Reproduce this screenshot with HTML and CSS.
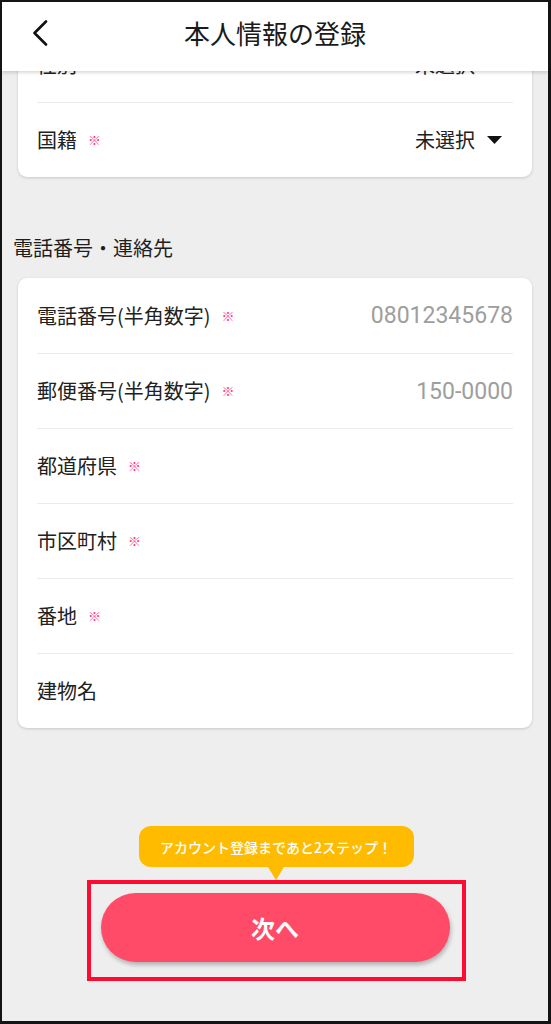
FILE: index.html
```html
<!DOCTYPE html>
<html lang="ja">
<head>
<meta charset="utf-8">
<title>本人情報の登録</title>
<link rel="stylesheet" href="styles.css">
</head>
<body>
<div class="frame">
  <header class="appbar">
    <div class="appbar-side">
      <button class="back" aria-label="戻る">
        <svg width="16" height="26" viewBox="0 0 16 26"><path d="M14 1.5 L2.5 13 L14 24.5" fill="none" stroke="#111" stroke-width="2.6" stroke-linecap="round" stroke-linejoin="round"/></svg>
      </button>
    </div>
    <h1 class="title">本人情報の登録</h1>
    <div class="appbar-side"></div>
  </header>

  <main class="content">
    <section class="card">
      <div class="row">
        <span class="label">性別<span class="req">※</span></span>
        <span class="select">未選択<svg class="caret" width="15" height="8" viewBox="0 0 15 8"><path d="M0 0 H15 L7.5 8 Z" fill="#111"/></svg></span>
      </div>
      <div class="row">
        <span class="label">国籍<span class="req">※</span></span>
        <span class="select">未選択<svg class="caret" width="15" height="8" viewBox="0 0 15 8"><path d="M0 0 H15 L7.5 8 Z" fill="#111"/></svg></span>
      </div>
    </section>

    <h2 class="section-title">電話番号・連絡先</h2>

    <section class="card">
      <div class="row">
        <span class="label">電話番号(半角数字)<span class="req">※</span></span>
        <span class="placeholder">08012345678</span>
      </div>
      <div class="row">
        <span class="label">郵便番号(半角数字)<span class="req">※</span></span>
        <span class="placeholder">150-0000</span>
      </div>
      <div class="row">
        <span class="label">都道府県<span class="req">※</span></span>
      </div>
      <div class="row">
        <span class="label">市区町村<span class="req">※</span></span>
      </div>
      <div class="row">
        <span class="label">番地<span class="req">※</span></span>
      </div>
      <div class="row">
        <span class="label">建物名</span>
      </div>
    </section>

    <div class="footer">
      <div class="tip">アカウント登録まであと2ステップ！</div>
      <div class="highlight">
        <button class="next">次へ</button>
      </div>
    </div>
  </main>
</div>
</body>
</html>
```

FILE: styles.css
```css
* { box-sizing: border-box; }

html, body {
  margin: 0;
  padding: 0;
  background: #eeeeee;
}

body {
  font-family: "Noto Sans CJK JP", Roboto, sans-serif;
  color: #212121;
}

.frame {
  position: relative;
  width: 551px;
  height: 1024px;
  overflow: hidden;
  background: #eeeeee;
  border-style: solid;
  border-color: #141414;
  border-width: 2px 3px 3px 2px;
}

/* header overlays scrolled content */
.appbar {
  position: absolute;
  top: 0;
  left: 0;
  right: 0;
  height: 69px;
  z-index: 5;
  background: #ffffff;
  box-shadow: 0 2px 3px rgba(0, 0, 0, 0.14);
  display: grid;
  grid-template-columns: 1fr auto 1fr;
  align-items: center;
  padding-bottom: 7px;
}

.appbar-side {
  display: flex;
  align-items: center;
}

.back {
  margin-left: 30px;
  padding: 0;
  border: 0;
  background: none;
  display: flex;
}

.title {
  margin: 0;
  font-size: 26px;
  font-weight: 400;
  line-height: 34px;
  color: #1a1a1a;
}

.content {
  padding-top: 25px;
}

.card {
  margin: 0 16px;
  background: #ffffff;
  border-radius: 9px;
  box-shadow: 0 1px 3px rgba(0, 0, 0, 0.16);
  padding: 0 19px;
}

.row {
  height: 75px;
  display: flex;
  align-items: center;
  justify-content: space-between;
  border-top: 1px solid #ebebeb;
}

.row:first-child {
  border-top: 0;
}

.label {
  font-size: 20px;
  line-height: 28px;
  display: flex;
  align-items: center;
}

.req {
  color: #ff3d84;
  font-size: 13px;
  font-weight: 700;
  margin-left: 11px;
}

.select {
  font-size: 20px;
  line-height: 28px;
  display: flex;
  align-items: center;
  gap: 12px;
  margin-right: 11px;
}

.caret {
  display: block;
}

.placeholder {
  font-family: Roboto, sans-serif;
  font-size: 23px;
  color: #9e9e9e;
}

.section-title {
  margin: 0;
  padding: 57px 11px 16px;
  font-size: 20px;
  font-weight: 400;
  line-height: 28px;
  color: #1e1e1e;
}

.footer {
  margin-top: 98px;
  display: flex;
  flex-direction: column;
  align-items: center;
}

.tip {
  position: relative;
  width: 275px;
  height: 41px;
  margin-left: 2px;
  border-radius: 12px;
  background: #ffbb00;
  color: #ffffff;
  font-size: 14px;
  font-weight: 500;
  display: flex;
  align-items: center;
  justify-content: center;
}

.tip::after {
  content: "";
  position: absolute;
  left: 50%;
  bottom: -13px;
  margin-left: -8px;
  border-left: 8px solid transparent;
  border-right: 8px solid transparent;
  border-top: 13px solid #ffbb00;
}

.highlight {
  margin-top: 13px;
  margin-left: 2px;
  width: 379px;
  height: 101px;
  border: 4px solid #ff0a30;
  padding: 9px 12px 15px 10px;
}

.next {
  display: flex;
  align-items: center;
  justify-content: center;
  width: 349px;
  height: 69px;
  border: 0;
  border-radius: 35px;
  background: #ff4b68;
  color: #ffffff;
  font-family: "Noto Sans CJK JP", sans-serif;
  font-size: 24px;
  font-weight: 700;
  box-shadow: 1px 3px 4px rgba(0, 0, 0, 0.25);
}
```
